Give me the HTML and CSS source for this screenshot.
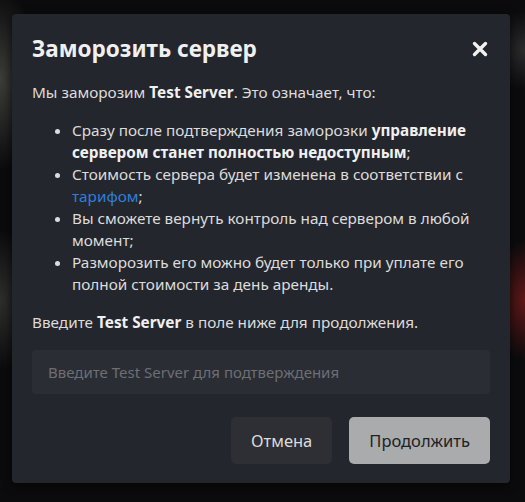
FILE: index.html
```html
<!DOCTYPE html>
<html lang="ru">
<head>
    <meta charset="UTF-8">
    <title>Заморозить сервер</title>
    <link rel="stylesheet" href="styles.css">
</head>
<body>
<div class="backdrop">
    <section class="modal">
        <header class="modal-header">
            <h2>Заморозить сервер</h2>
            <button class="close" aria-label="Закрыть">
                <svg width="16" height="16" viewBox="0 0 16 16">
                    <path d="M2.5 2.5 L13.5 13.5 M13.5 2.5 L2.5 13.5" stroke="#f2f2f2" stroke-width="3.4" stroke-linecap="round"/>
                </svg>
            </button>
        </header>

        <p class="intro">Мы заморозим <b>Test Server</b>. Это означает, что:</p>
        <ul class="terms">
            <li>Сразу после подтверждения заморозки <b>управление сервером станет полностью недоступным</b>;</li>
            <li>Стоимость сервера будет изменена в соответствии с <a href="#">тарифом</a>;</li>
            <li>Вы сможете вернуть контроль над сервером в любой момент;</li>
            <li>Разморозить его можно будет только при уплате его полной стоимости за день аренды.</li>
        </ul>

        <p class="hint">Введите <b>Test Server</b> в поле ниже для продолжения.</p>
        <input class="confirm-input" type="text" placeholder="Введите Test Server для подтверждения">

        <div class="actions">
            <button class="btn btn-cancel">Отмена</button>
            <button class="btn btn-continue">Продолжить</button>
        </div>
    </section>
</div>
</body>
</html>
```

FILE: styles.css
```css
body {
    margin: 0;
    padding: 0;
    min-height: 100vh;
    font-family: "Noto Sans", "Open Sans", sans-serif;
    background-color: #0b0b0d;
    background-image:
        radial-gradient(ellipse 40px 90px at 0px 80px, rgba(120, 120, 110, 0.45), transparent),
        radial-gradient(ellipse 40px 70px at 0px 300px, rgba(110, 110, 100, 0.35), transparent),
        radial-gradient(ellipse 40px 60px at 525px 300px, rgba(150, 30, 30, 0.6), transparent),
        radial-gradient(ellipse 40px 40px at 525px 50px, rgba(90, 90, 90, 0.4), transparent);
}

.backdrop {
    padding: 14px 15px 18px 12px;
}

.modal {
    background-color: #24262d;
    border-radius: 4px;
    padding: 18px 20px 19px 20px;
    color: #dcdcdc;
    box-shadow: 0px 2px 10px rgba(0, 0, 0, 0.6);
}

.modal-header {
    display: flex;
    justify-content: space-between;
    align-items: center;
    margin-bottom: 15px;
}

.modal-header h2 {
    margin: 0;
    font-size: 22.5px;
    font-weight: 700;
    color: #f0f0f0;
    line-height: 34px;
}

.close {
    background: none;
    border: none;
    padding: 0;
    margin-right: 2px;
    cursor: pointer;
    display: flex;
}

.intro,
.hint {
    margin: 0;
    font-size: 15.3px;
    line-height: 22px;
}

b {
    font-weight: 700;
    color: #f0f0f0;
}

.terms {
    margin: 16px 0 16px 0;
    padding-left: 40px;
    font-size: 15.3px;
    line-height: 22px;
}

.terms a {
    color: #2f7fd9;
    text-decoration: none;
}

.confirm-input {
    display: block;
    box-sizing: border-box;
    width: 100%;
    height: 44px;
    margin-top: 17px;
    padding: 0 16px;
    background-color: #2b2d34;
    border: none;
    border-radius: 4px;
    font-family: inherit;
    font-size: 15px;
    color: #dcdcdc;
}

.confirm-input::placeholder {
    color: #6d6f75;
}

.actions {
    display: flex;
    justify-content: flex-end;
    gap: 17px;
    margin-top: 23px;
}

.btn {
    height: 47px;
    border: none;
    border-radius: 5px;
    font-family: inherit;
    font-size: 16.5px;
    padding: 0 20px;
    cursor: pointer;
}

.btn-cancel {
    background-color: #2d2f35;
    color: #dcdcdc;
}

.btn-continue {
    background-color: #a9abad;
    color: #222;
}
```
